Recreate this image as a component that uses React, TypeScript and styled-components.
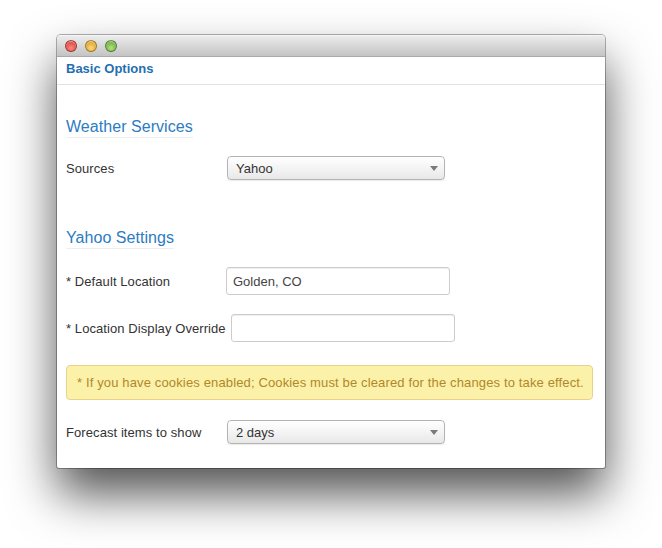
import React from "react";
import styled, { createGlobalStyle } from "styled-components";

const Global = createGlobalStyle`
  html, body { margin: 0; padding: 0; background: #ffffff; }
  body {
    font-family: "Liberation Sans", Arial, Helvetica, sans-serif;
    font-size: 13px;
    color: #333333;
  }
`;

const Desktop = styled.div`
  width: 662px;
  height: 548px;
  box-sizing: border-box;
  padding: 35px 0 0 57px;
  overflow: hidden;
`;

const Window = styled.div`
  width: 548px;
  height: 433px;
  box-sizing: border-box;
  background: #ffffff;
  border-radius: 4px 4px 2px 2px;
  box-shadow: 0 0 0 1px rgba(0, 0, 0, 0.3), 0 26px 48px rgba(0, 0, 0, 0.68);
  display: flex;
  flex-direction: column;
  overflow: hidden;
`;

const TitleBar = styled.div`
  height: 22px;
  flex: 0 0 22px;
  box-sizing: border-box;
  background: linear-gradient(#ececec, #d3d3d3 60%, #c4c4c4);
  border-top: 1px solid #f6f6f6;
  border-bottom: 1px solid #a9a9a9;
  display: flex;
  align-items: center;
  gap: 8px;
  padding-left: 8px;
`;

const Light = styled.span<{ $c: string; $d: string }>`
  width: 12px;
  height: 12px;
  border-radius: 50%;
  box-sizing: border-box;
  background: radial-gradient(circle at 50% 70%, ${(p) => p.$c} 0%, ${(p) => p.$d} 85%);
  border: 1px solid rgba(0, 0, 0, 0.3);
  box-shadow: inset 0 1px 1px rgba(255, 255, 255, 0.5);
`;

const Tabs = styled.div`
  height: 28px;
  box-sizing: border-box;
  padding: 2px 9px 0;
  border-bottom: 1px solid #e2e2e2;
  flex: 0 0 auto;
`;

const Tab = styled.div`
  font-weight: bold;
  font-size: 13px;
  line-height: 20px;
  color: #1f6fb2;
`;

const Content = styled.div`
  padding: 32px 12px 0 9px;
  display: flex;
  flex-direction: column;
`;

const Heading = styled.div<{ $top: number }>`
  align-self: flex-start;
  font-size: 16px;
  line-height: 20px;
  letter-spacing: 0.05px;
  color: #2b7cc1;
  border-bottom: 1px solid #eeeeee;
  margin-top: ${(p) => p.$top}px;
`;

const Row = styled.div<{ $top: number }>`
  display: flex;
  align-items: center;
  margin-top: ${(p) => p.$top}px;
`;

const Label = styled.label`
  min-width: 155px;
  margin-right: 5px;
  padding-top: 2px;
  font-size: 13px;
  line-height: 18px;
  letter-spacing: 0.08px;
  color: #333;
  white-space: nowrap;
`;

const Select = styled.div`
  width: 218px;
  height: 24px;
  box-sizing: border-box;
  margin-left: 1px;
  border: 1px solid #b4b4b4;
  border-radius: 4px;
  background: linear-gradient(#ffffff, #f4f4f4 50%, #e8e8e8);
  box-shadow: 0 1px 1px rgba(0, 0, 0, 0.08);
  display: flex;
  align-items: center;
  justify-content: space-between;
  padding: 0 6px 0 8px;
  font-size: 13px;
  color: #333;
`;

const Caret = styled.span`
  width: 0;
  height: 0;
  border-left: 4px solid transparent;
  border-right: 4px solid transparent;
  border-top: 5px solid #7a7a7a;
`;

const Input = styled.div`
  width: 224px;
  height: 28px;
  box-sizing: border-box;
  border: 1px solid #cccccc;
  border-radius: 3px;
  box-shadow: inset 0 1px 1px rgba(0, 0, 0, 0.07);
  background: #fff;
  display: flex;
  align-items: center;
  padding: 0 6px;
  font-size: 13px;
  color: #444;
`;

const Alert = styled.div`
  margin-top: 23px;
  height: 35px;
  box-sizing: border-box;
  background: #fcf1a8;
  border: 1px solid #ead189;
  border-radius: 4px;
  display: flex;
  align-items: center;
  padding: 0 10px;
  font-size: 13px;
  letter-spacing: 0.14px;
  color: #b0882a;
  white-space: nowrap;
`;

export default function App() {
  return (
    <>
      <Global />
      <Desktop>
        <Window>
          <TitleBar>
            <Light $c="#ff8a80" $d="#d23a33" />
            <Light $c="#ffd77a" $d="#d99a22" />
            <Light $c="#b6e37f" $d="#5fa334" />
          </TitleBar>
          <Tabs>
            <Tab>Basic Options</Tab>
          </Tabs>
          <Content>
            <Heading $top={0}>Weather Services</Heading>
            <Row $top={18}>
              <Label>Sources</Label>
              <Select>
                <span>Yahoo</span>
                <Caret />
              </Select>
            </Row>
            <Heading $top={48}>Yahoo Settings</Heading>
            <Row $top={18}>
              <Label>* Default Location</Label>
              <Input>Golden, CO</Input>
            </Row>
            <Row $top={19}>
              <Label>* Location Display Override</Label>
              <Input />
            </Row>
            <Alert>* If you have cookies enabled; Cookies must be cleared for the changes to take effect.</Alert>
            <Row $top={20}>
              <Label>Forecast items to show</Label>
              <Select>
                <span>2 days</span>
                <Caret />
              </Select>
            </Row>
          </Content>
        </Window>
      </Desktop>
    </>
  );
}
